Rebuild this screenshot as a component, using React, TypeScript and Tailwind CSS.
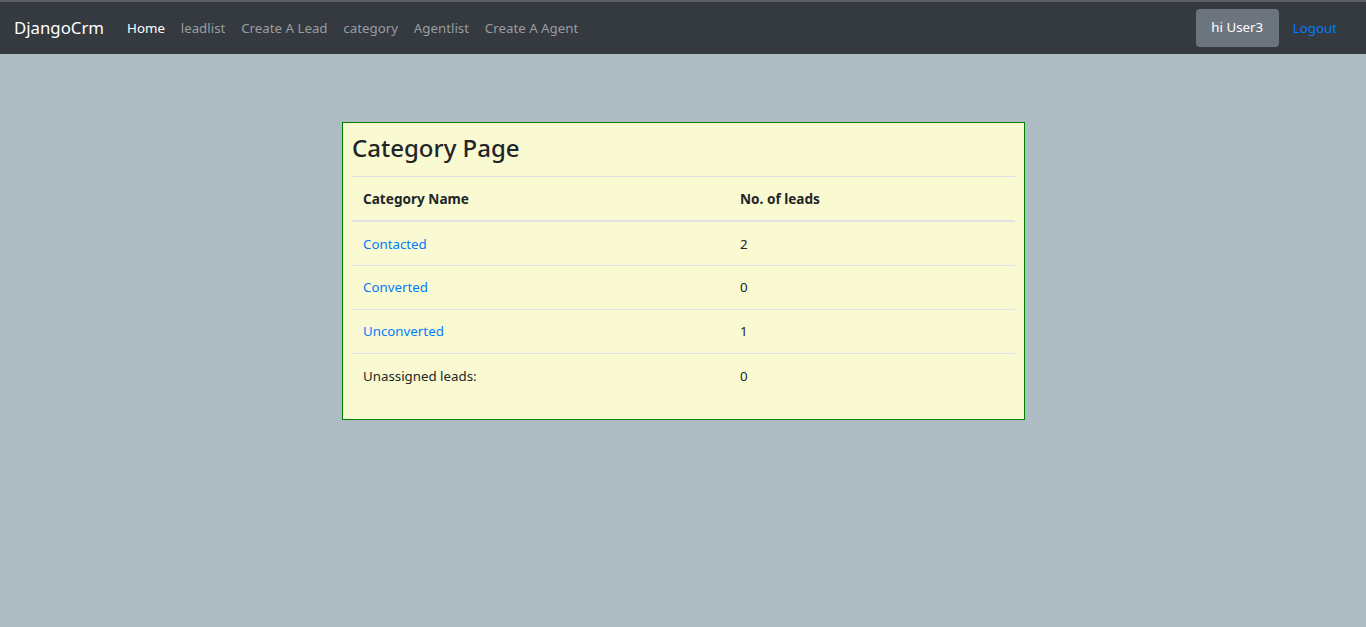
import React from "react";

const rows = [
  { name: "Contacted", count: 2, link: true },
  { name: "Converted", count: 0, link: true },
  { name: "Unconverted", count: 1, link: true },
  { name: "Unassigned leads:", count: 0, link: false },
];

export default function App() {
  return (
    <div className="min-h-[627px] bg-[#aebcc4] text-[13.3px] text-[#212529]" style={{ fontFamily: '"Noto Sans", "Open Sans", sans-serif' }}>
      <nav className="h-[54px] bg-[#343a40] border-t-2 border-[#5c5f63] flex items-center pl-[14px] pr-[29px]">
        <span className="text-white text-[16.8px] mr-[23px]">DjangoCrm</span>
        <div className="flex items-center gap-[15.8px] pt-[2px]">
          <a className="text-white">Home</a>
          <a className="text-[#9a9da0]">leadlist</a>
          <a className="text-[#9a9da0]">Create A Lead</a>
          <a className="text-[#9a9da0]">category</a>
          <a className="text-[#9a9da0]">Agentlist</a>
          <a className="text-[#9a9da0]">Create A Agent</a>
        </div>
        <div className="ml-auto flex items-center">
          <button className="bg-[#6c757d] text-white rounded-[4px] h-[38px] w-[83px] mr-[14px]">hi User3</button>
          <a className="text-[#007bff] pt-[1px]">Logout</a>
        </div>
      </nav>
      <div className="flex justify-center pt-[68px]">
        <div className="w-[683px] ml-[1px] border border-[#008000] bg-[#fafad2] px-[9px] pb-[22px]">
          <h1 className="text-[24px] font-medium leading-[1.2] mt-[11px] mb-[13px]">Category Page</h1>
          <table className="w-full border-collapse">
            <thead>
              <tr className="border-t border-b-2 border-[#dee2e6]">
                <th className="text-left font-bold text-[13.6px] px-[11px] h-[45px] pt-[2px] w-[377px]">Category Name</th>
                <th className="text-left font-bold text-[13.6px] px-[11px] pt-[2px]">No. of leads</th>
              </tr>
            </thead>
            <tbody>
              {rows.map((r, i) => (
                <tr key={r.name} className={i > 0 ? "border-t border-[#dee2e6]" : ""}>
                  <td className="px-[11px] h-[44px] pt-[2px]">
                    {r.link ? <a className="text-[#007bff]">{r.name}</a> : r.name}
                  </td>
                  <td className="px-[11px] pt-[2px]">{r.count}</td>
                </tr>
              ))}
            </tbody>
          </table>
        </div>
      </div>
    </div>
  );
}
